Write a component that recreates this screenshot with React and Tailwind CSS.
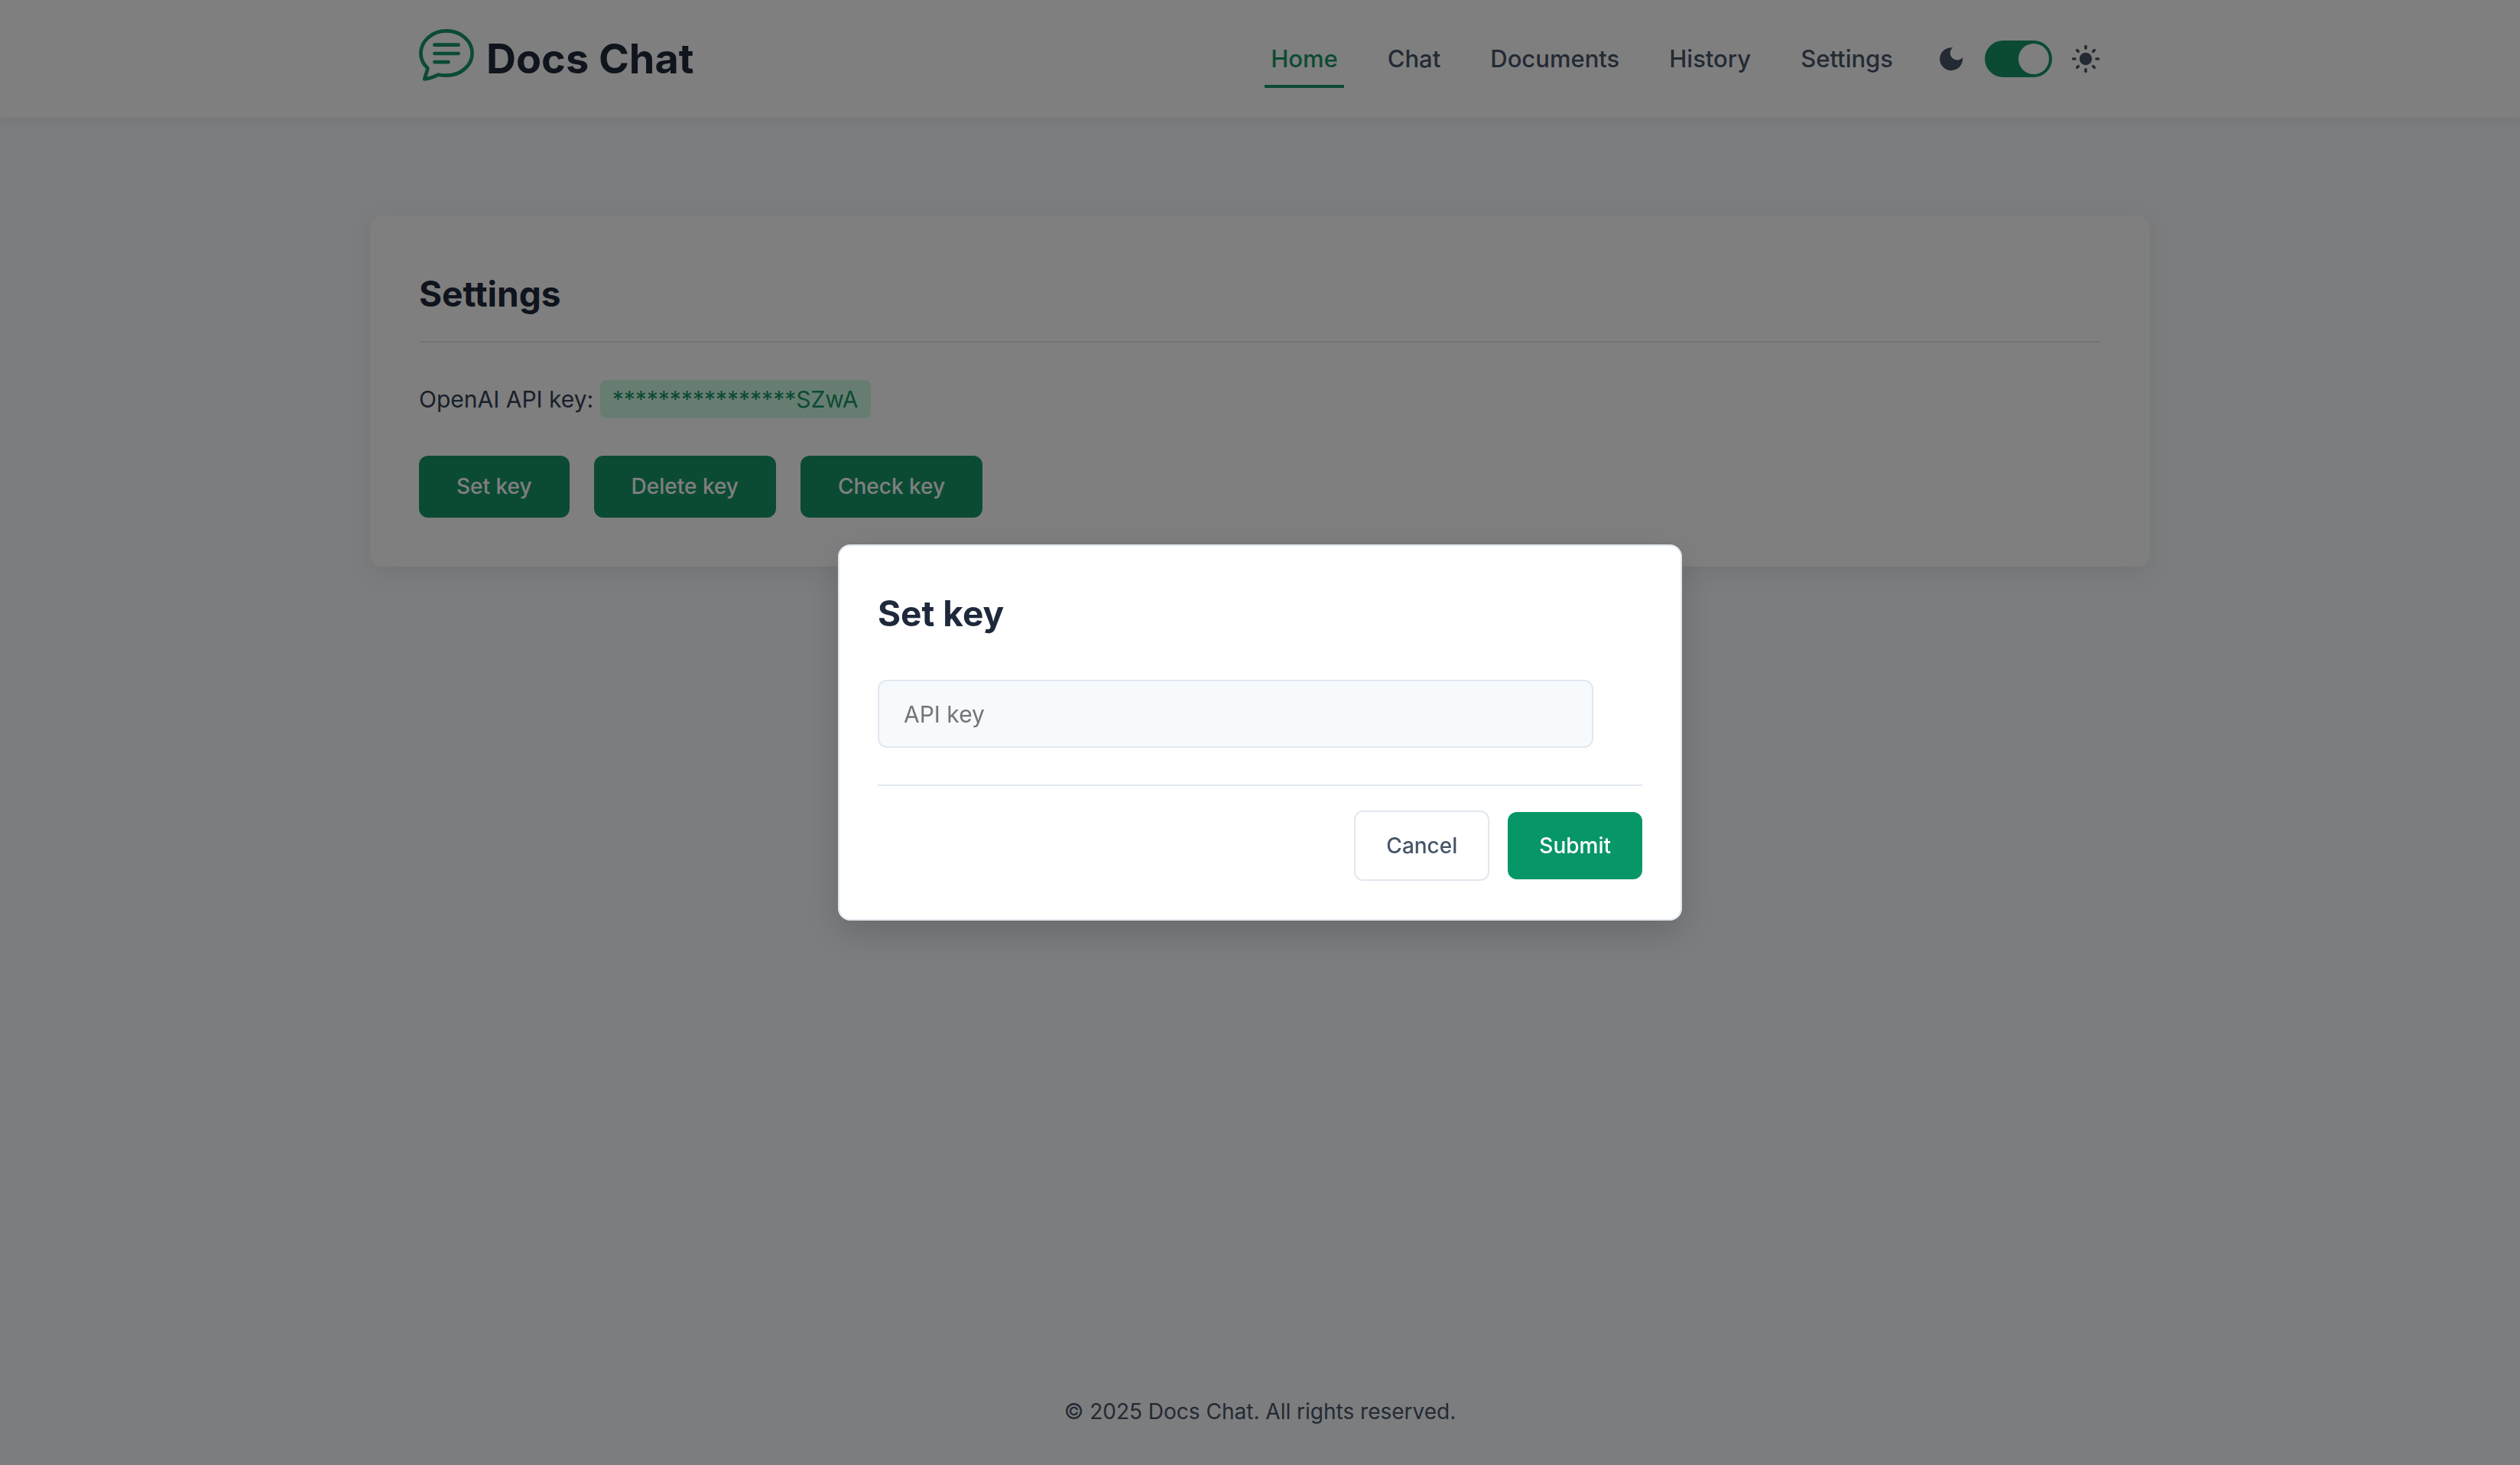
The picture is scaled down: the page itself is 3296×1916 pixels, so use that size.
const NAV = ["Home", "Chat", "Documents", "History", "Settings"];

function Logo() {
  return (
    <svg viewBox="0 0 72 78" className="h-[78px] w-[72px] text-[#169666]" fill="none" stroke="currentColor" strokeWidth="4.7" strokeLinecap="round" strokeLinejoin="round" aria-hidden="true">
      <path d="M36 2.400C17.400 2.400 2.400 15.400 2.400 31.500C2.400 39.400 5.600 46 11.200 51L10.800 54L7.200 65.400C13.500 64.800 19 63 25.300 59.700C29 60.500 32 60.700 36 60.700C54.600 60.700 69.600 47.600 69.600 31.500S54.600 2.400 36 2.400z" />
      <path d="M20.400 20.700H51.600M20.400 32H51.600M20.400 43.200H38.400" />
    </svg>
  );
}

function Moon() {
  return (
    <svg viewBox="-5 -5 40 40" className="size-10" fill="currentColor" aria-hidden="true">
      <path d="M17.300 .3A15 15 0 1 0 29.900 12.900A9 9 0 1 1 17.300 .3z" />
    </svg>
  );
}

function Sun() {
  return (
    <svg viewBox="-20 -20 40 40" className="size-10" fill="none" stroke="currentColor" strokeWidth="3.6" strokeLinecap="round" aria-hidden="true">
      <circle r="8.200" fill="currentColor" stroke="none" />
      <path d="M0 -16.500V-13.900M0 16.500V13.900M-16.500 0H-13.900M16.500 0H13.900M-11.300 -11.300L-9.700 -9.700M11.300 11.300L9.700 9.700M-11.300 11.300L-9.700 9.700M11.300 -11.300L9.700 -9.700" />
    </svg>
  );
}

export default function App() {
  return (
    <div className="flex min-h-screen flex-col bg-[#f8fafc] font-['Inter',sans-serif] text-[30px] leading-[52px] text-[#334155]">
      <header className="relative bg-white shadow-[0_4px_12px_rgba(0,0,0,0.07)]">
        <div className="mx-auto flex h-[154px] max-w-[2200px] items-center justify-between">
          <a href="#" className="flex items-center gap-4 text-[54px] font-bold text-[#1e293b]">
            <Logo />
            <span>Docs Chat</span>
          </a>
          <div className="flex items-center gap-12">
            <nav className="flex gap-[49px] text-[31px]">
              {NAV.map((n) => (
                <a key={n} href="#" className={"border-b-4 px-2 pt-3 pb-2 font-medium " + (n === "Home" ? "border-[#169666] text-[#169666]" : "border-transparent text-[#475569]")}>
                  {n}
                </a>
              ))}
            </nav>
            <div className="flex items-center gap-6 text-[#475569]">
              <Moon />
              <label className="relative flex h-12 w-[88px] items-center rounded-full bg-[#169666] p-1">
                <input type="checkbox" defaultChecked aria-label="Light theme" className="absolute inset-0 size-full cursor-pointer appearance-none" />
                <span className="ml-auto size-10 rounded-full bg-white" />
              </label>
              <Sun />
            </div>
          </div>
        </div>
      </header>

      <main className="mx-auto mt-32 w-full max-w-[2328px] flex-1">
        <section className="rounded-2xl bg-white p-16 shadow-[0_8px_32px_rgba(0,0,0,0.08)]">
          <h2 className="border-b-2 border-[#e2e8f0] pb-6 text-[46px] leading-[76px] font-bold text-[#1e293b]">Settings</h2>
          <p className="mt-12">
            OpenAI API key:{" "}
            <span className="rounded-lg bg-[#d1fae5] px-4 py-[7px] text-[#169666]">****************SZwA</span>
          </p>
          <div className="mt-12 flex gap-8">
            {["Set key", "Delete key", "Check key"].map((t) => (
              <button key={t} type="button" className="rounded-xl bg-[#169666] px-[49px] py-[18px] text-[28px] leading-[45px] font-medium text-white">
                {t}
              </button>
            ))}
          </div>
        </section>
      </main>

      <footer className="py-12 text-center text-[28px] leading-[44px] text-[#475569]">© 2025 Docs Chat. All rights reserved.</footer>

      <div className="fixed inset-0 flex items-center justify-center bg-black/50">
        <form role="dialog" aria-labelledby="dialog-title" className="w-full max-w-[1104px] rounded-2xl border-2 border-[#e2e8f0] bg-white p-[50px] shadow-[0_16px_48px_rgba(0,0,0,0.16)]">
          <h3 id="dialog-title" className="text-[46px] leading-[77px] font-bold text-[#1e293b]">Set key</h3>
          <input aria-label="API key" placeholder="API key" className="mt-12 block h-[89px] w-[936px] max-w-full rounded-xl border-2 border-[#e2e8f0] bg-[#f6fafd] px-8 placeholder:text-[#757575]" />
          <div className="mt-12 flex items-center justify-end gap-6 border-t-2 border-[#e2e8f0] pt-8 text-[28px] leading-[48px] font-medium">
            <button type="button" className="rounded-xl border-2 border-[#e2e8f0] px-10 py-5 text-[#475569]">Cancel</button>
            <button type="submit" className="rounded-xl bg-[#079668] px-[41px] py-5 text-white">Submit</button>
          </div>
        </form>
      </div>
    </div>
  );
}
